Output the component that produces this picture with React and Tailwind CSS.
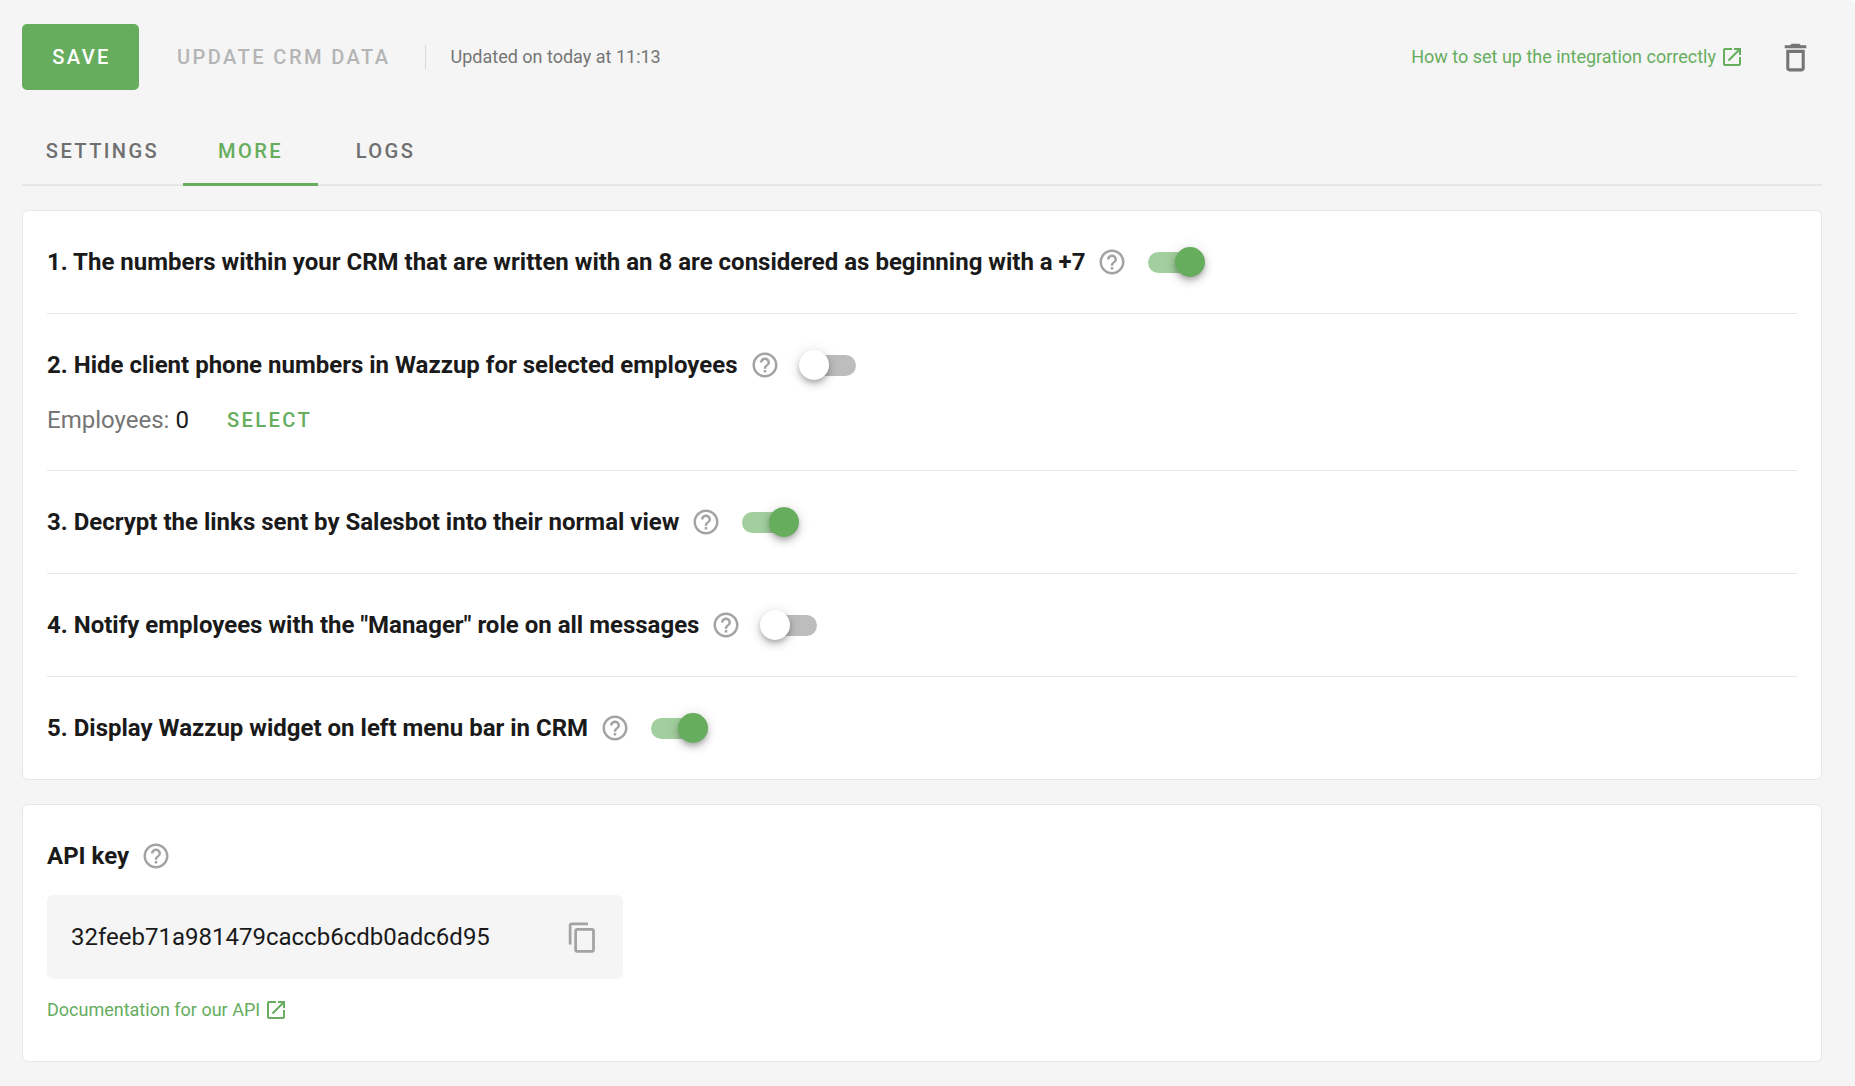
const HELP = "M11 18h2v-2h-2v2zm1-16C6.48 2 2 6.48 2 12s4.48 10 10 10 10-4.48 10-10S17.52 2 12 2zm0 18c-4.41 0-8-3.59-8-8s3.59-8 8-8 8 3.59 8 8-3.59 8-8 8zm0-14c-2.21 0-4 1.79-4 4h2c0-1.1.9-2 2-2s2 .9 2 2c0 2-3 1.75-3 5h2c0-2.25 3-2.5 3-5 0-2.21-1.79-4-4-4z";
const OPEN = "M19 19H5V5h7V3H5c-1.11 0-2 .9-2 2v14c0 1.1.89 2 2 2h14c1.1 0 2-.9 2-2v-7h-2v7zM14 3v2h3.59l-9.83 9.83 1.41 1.41L19 6.41V10h2V3h-7z";
const TRASH = "M6 19c0 1.1.9 2 2 2h8c1.1 0 2-.9 2-2V7H6v12zM8 9h8v10H8V9zm7.5-5l-1-1h-5l-1 1H5v2h14V4h-3.5z";
const COPY = "M16 1H4c-1.1 0-2 .9-2 2v14h2V3h12V1zm3 4H8c-1.1 0-2 .9-2 2v14c0 1.1.9 2 2 2h11c1.1 0 2-.9 2-2V7c0-1.1-.9-2-2-2zm0 16H8V7h11v14z";

function Icon({ d, className }) {
  return (
    <svg viewBox="0 0 24 24" fill="currentColor" className={className}>
      <path d={d} />
    </svg>
  );
}

function Help({ className = "" }) {
  return <Icon d={HELP} className={"w-[30px] h-[30px] text-[#a3a3a3] shrink-0 " + className} />;
}

function Toggle({ on }) {
  return (
    <span className="relative block w-[57px] h-[30px] shrink-0">
      <span className={on ? "absolute left-0 top-[5px] w-[54px] h-[21px] rounded-full bg-[#a3cf9e]" : "absolute left-[3px] top-[5px] w-[54px] h-[21px] rounded-full bg-[#bdbdbd]"} />
      <span className={on ? "absolute right-0 top-0 w-[30px] h-[30px] rounded-full bg-[#66ad5e] shadow-[0_3px_5px_-1px_rgba(0,0,0,0.2),0_5px_8px_0_rgba(0,0,0,0.14),0_1px_14px_0_rgba(0,0,0,0.12)]" : "absolute left-0 top-0 w-[30px] h-[30px] rounded-full bg-white shadow-[0_3px_5px_-1px_rgba(0,0,0,0.2),0_5px_8px_0_rgba(0,0,0,0.14),0_1px_14px_0_rgba(0,0,0,0.12)]"} />
    </span>
  );
}

function Row({ text, on, children }) {
  return (
    <div className="border-b border-[#e6e6e6] last:border-b-0 py-[26px]">
      <div className="flex items-center h-[50px]">
        <span className="text-[24px] font-bold text-[#1a1a1a] leading-[30px]">{text}</span>
        <Help className={on ? "ml-[12px] mr-[21px]" : "ml-[12px] mr-[19px]"} />
        <Toggle on={on} />
      </div>
      {children}
    </div>
  );
}

function Tab({ children, active, className }) {
  return (
    <div className={"flex items-center justify-center text-[20.1px] font-medium tracking-[2.4px] " + (active ? "h-[67px] text-[#66ad5e] border-b-[3px] border-[#66ad5e] " : "h-[64px] text-[#6f6f6f] ") + className}>
      {children}
    </div>
  );
}

export default function App() {
  return (
    <div className="min-h-[1086px] bg-[#f5f5f5] rounded-tr-[6px] pl-[22px] pr-[33px] pt-[24px] pb-[25px] font-['Roboto',sans-serif]">
      <div className="flex items-center h-[66px] mr-[-1px]">
        <button className="w-[117px] h-[66px] pl-[2px] rounded-[5px] bg-[#66ad5e] text-white text-[20.1px] font-medium tracking-[2.4px]">SAVE</button>
        <span className="ml-[38px] text-[20.1px] font-medium tracking-[2.4px] text-[#b5b5b5]">UPDATE CRM DATA</span>
        <span className="ml-[34px] w-px h-[24px] bg-[#d9d9d9]" />
        <span className="ml-[25px] mb-[2px] text-[18px] text-[#757575]">Updated on today at 11:13</span>
        <span className="ml-auto mb-[2px] text-[18px] text-[#66ad5e]">How to set up the integration correctly</span>
        <Icon d={OPEN} className="ml-[4px] mr-[1px] w-[24px] h-[24px] text-[#66ad5e]" />
        <Icon d={TRASH} className="ml-[32px] mr-[9px] w-[37px] h-[37px] text-[#757575]" />
      </div>
      <div className="flex mt-[29px] border-b-2 border-[#e6e6e6] h-[67px]">
        <Tab className="w-[161px]">SETTINGS</Tab>
        <Tab active className="w-[135px]">MORE</Tab>
        <Tab className="w-[135px]">LOGS</Tab>
      </div>
      <div className="mt-[24px] bg-white rounded-[6px] border border-[#e6e6e6] px-[24px]">
        <Row on text="1. The numbers within your CRM that are written with an 8 are considered as beginning with a +7" />
        <Row text="2. Hide client phone numbers in Wazzup for selected employees">
          <div className="flex items-center mt-[3px] mb-[-3px] h-[54px] text-[24px]">
            <span className="text-[#757575]">Employees:</span>
            <span className="ml-[6px] text-[#1a1a1a]">0</span>
            <span className="ml-[38px] text-[20.1px] font-medium tracking-[2.4px] text-[#66ad5e]">SELECT</span>
          </div>
        </Row>
        <Row on text="3. Decrypt the links sent by Salesbot into their normal view" />
        <Row text={'4. Notify employees with the "Manager" role on all messages'} />
        <Row on text="5. Display Wazzup widget on left menu bar in CRM" />
      </div>
      <div className="mt-[24px] bg-white rounded-[6px] border border-[#e6e6e6] px-[24px] pt-[26px] pb-[39px]">
        <div className="flex items-center h-[50px]">
          <span className="text-[24px] font-bold text-[#1a1a1a]">API key</span>
          <Help className="ml-[12px]" />
        </div>
        <div className="mt-[14px] flex items-center justify-between w-[576px] h-[84px] rounded-[6px] bg-[#f5f5f5] pl-[24px] pr-[24px]">
          <span className="text-[24px] text-[#1a1a1a]">32feeb71a981479caccb6cdb0adc6d95</span>
          <Icon d={COPY} className="w-[33px] h-[33px] text-[#a3a3a3]" />
        </div>
        <div className="mt-[17px] flex items-center h-[26px]">
          <span className="text-[18px] text-[#66ad5e]">Documentation for our API</span>
          <Icon d={OPEN} className="ml-[4px] mt-[1px] w-[24px] h-[24px] text-[#66ad5e]" />
        </div>
      </div>
    </div>
  );
}
